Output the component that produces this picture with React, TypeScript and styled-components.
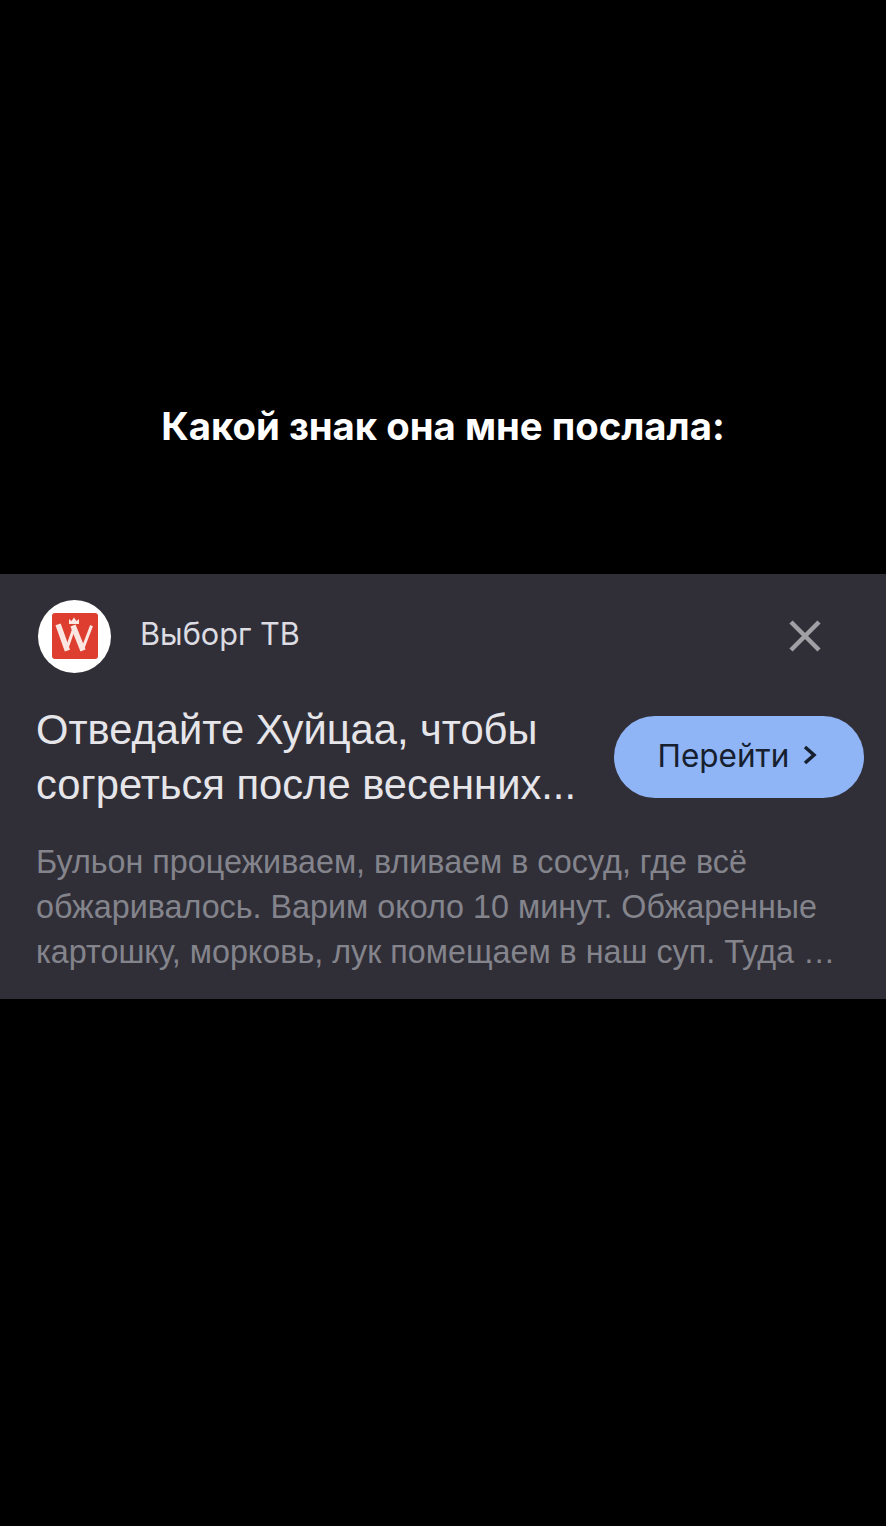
import React from 'react';
import styled, { createGlobalStyle } from 'styled-components';

const GlobalStyle = createGlobalStyle`
  html, body {
    margin: 0;
    padding: 0;
    background: #000;
  }
`;

const Page = styled.div`
  width: 886px;
  height: 1526px;
  background: #000;
  display: flex;
  flex-direction: column;
  font-family: Inter, "Liberation Sans", sans-serif;
`;

const Caption = styled.h1`
  margin: 0;
  height: 574px;
  padding-top: 404px;
  box-sizing: border-box;
  text-align: center;
  color: #fff;
  font-size: 38.300px;
  line-height: 44px;
  font-weight: 700;
`;

const AdCard = styled.section`
  height: 425px;
  box-sizing: border-box;
  background: #302f38;
  padding: 25px 22px 0 36px;
`;

const AdHeader = styled.div`
  display: flex;
  align-items: center;
  height: 74px;
`;

const LogoCircle = styled.div`
  width: 73px;
  height: 73px;
  margin-left: 2px;
  border-radius: 50%;
  background: #fff;
  display: flex;
  align-items: center;
  justify-content: center;
  flex-shrink: 0;
`;

const Advertiser = styled.span`
  margin: -6px 0 0 29px;
  flex: 1;
  color: #dcdce2;
  font-size: 30.700px;
  font-weight: 400;
`;

const CloseButton = styled.button`
  border: 0;
  padding: 0;
  margin-right: 42px;
  background: none;
  display: flex;
`;

const MainRow = styled.div`
  display: flex;
  align-items: center;
  justify-content: space-between;
  margin-top: 29px;
`;

const Headline = styled.h2`
  margin: 0;
  color: #e6e6ea;
  font-family: "Liberation Sans", Arial, sans-serif;
  font-size: 41.700px;
  line-height: 55px;
  font-weight: 400;
`;

const GoButton = styled.button`
  width: 250px;
  height: 82px;
  border: 0;
  border-radius: 41px;
  background: #8fb5f6;
  color: #16202f;
  font-family: inherit;
  font-size: 31.500px;
  display: flex;
  align-items: center;
  justify-content: center;
  gap: 14px;
  padding: 0 3px 4px 0;
`;

const Description = styled.p`
  margin: 28px 0 0;
  color: #84848c;
  font-family: "Liberation Sans", Arial, sans-serif;
  font-size: 32.300px;
  line-height: 45px;
  white-space: nowrap;
`;

const Logo = () => (
  <svg width="46" height="46" viewBox="0 0 46 46">
    <rect width="46" height="46" rx="3" fill="#de3e2f" />
    <g fill="none" stroke="#fbe6e2" strokeLinecap="square">
      <path d="M7 14l7.500 21M22 15l8 20" strokeWidth="5.500" />
      <path d="M15 35l7-20M31 35l8-21" strokeWidth="3" />
    </g>
    <path d="M17 6l2.500 2L22 4.500 24.500 8 27 6v5H17z" fill="#fbe6e2" />
  </svg>
);

const CloseIcon = () => (
  <svg width="34" height="34" viewBox="0 0 34 34">
    <path d="M3 3l28 28M31 3L3 31" stroke="#a1a1a5" strokeWidth="4.500" fill="none" />
  </svg>
);

const Chevron = () => (
  <svg width="14" height="20" viewBox="0 0 14 20">
    <path d="M2 2l9 8-9 8" stroke="#16202f" strokeWidth="3.500" fill="none" />
  </svg>
);

const App: React.FC = () => (
  <Page>
    <GlobalStyle />
    <Caption>Какой знак она мне послала:</Caption>
    <AdCard>
      <AdHeader>
        <LogoCircle>
          <Logo />
        </LogoCircle>
        <Advertiser>Выборг ТВ</Advertiser>
        <CloseButton>
          <CloseIcon />
        </CloseButton>
      </AdHeader>
      <MainRow>
        <Headline>
          Отведайте Хуйцаа, чтобы
          <br />
          согреться после весенних...
        </Headline>
        <GoButton>
          Перейти
          <Chevron />
        </GoButton>
      </MainRow>
      <Description>
        Бульон процеживаем, вливаем в сосуд, где всё
        <br />
        обжаривалось. Варим около 10 минут. Обжаренные
        <br />
        картошку, морковь, лук помещаем в наш суп. Туда …
      </Description>
    </AdCard>
  </Page>
);

export default App;
